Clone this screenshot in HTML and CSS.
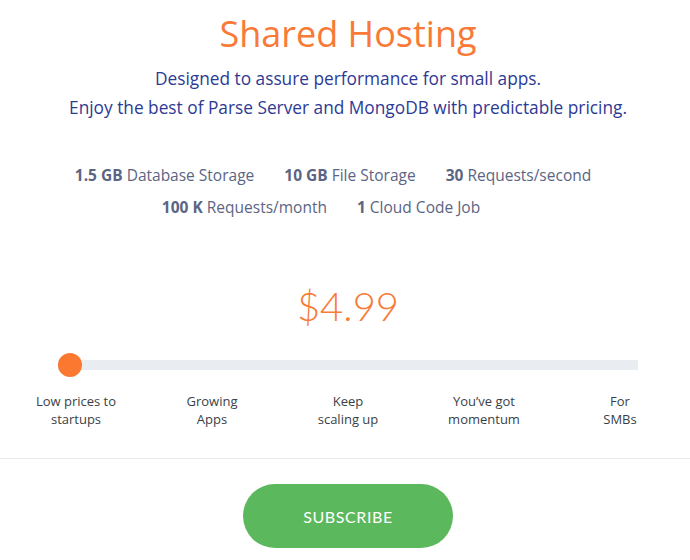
FILE: index.html
```html
<!DOCTYPE html>
<html>
<head>
<meta charset="utf-8">
<link rel="stylesheet" href="styles.css">
</head>
<body>
<div class="page">
  <h1 class="title">Shared Hosting</h1>
  <p class="subtitle">Designed to assure performance for small apps.<br>Enjoy the best of Parse Server and MongoDB with predictable pricing.</p>
  <ul class="features">
    <li><b>1.5 GB</b> Database Storage</li>
    <li><b>10 GB</b> File Storage</li>
    <li><b>30</b> Requests/second</li>
    <li><b>100 K</b> Requests/month</li>
    <li class="last"><b>1</b> Cloud Code Job</li>
  </ul>
  <div class="price">$4.99</div>
  <div class="slider">
    <div class="track"></div>
    <div class="thumb"></div>
  </div>
  <div class="labels">
    <div class="label">Low prices to<br>startups</div>
    <div class="label">Growing<br>Apps</div>
    <div class="label">Keep<br>scaling up</div>
    <div class="label">You’ve got<br>momentum</div>
    <div class="label">For<br>SMBs</div>
  </div>
</div>
<div class="divider"></div>
<div class="page actions">
  <button class="subscribe">SUBSCRIBE</button>
</div>
</body>
</html>
```

FILE: styles.css
```css
html, body {
  margin: 0;
  padding: 0;
  background: #ffffff;
}
body {
  font-family: "Open Sans", "Liberation Sans", sans-serif;
}
.page {
  width: 680px;
  margin-left: 8px;
  text-align: center;
}
.title {
  margin: 12px 0 0;
  font-size: 36px;
  line-height: 44px;
  font-weight: 400;
  color: #f97936;
}
.subtitle {
  margin: 8px 0 0;
  font-size: 17.3px;
  line-height: 29px;
  color: #2d3a94;
}
.features {
  list-style: none;
  margin: 42px auto 0;
  padding: 0;
  max-width: 590px;
  display: flex;
  flex-wrap: wrap;
  justify-content: center;
  row-gap: 9px;
  font-size: 15.5px;
  line-height: 23px;
  color: #5b6583;
}
.features li {
  margin-right: 30px;
}
.features li.last {
  margin-right: 54px;
}
.features b {
  font-weight: 700;
}
.price {
  margin-top: 63px;
  font-family: "Lato", "Open Sans", sans-serif;
  font-weight: 300;
  font-size: 40px;
  line-height: 48px;
  color: #f97936;
}
.slider {
  position: relative;
  margin: 23px 50px 0;
  height: 24px;
  display: flex;
  align-items: center;
}
.track {
  flex: 1;
  height: 10px;
  background: #e9edf1;
}
.thumb {
  position: absolute;
  left: 0;
  top: 0;
  width: 24px;
  height: 24px;
  border-radius: 50%;
  background: #fb7830;
}
.labels {
  margin-top: 15px;
  display: grid;
  grid-template-columns: repeat(5, 1fr);
  font-size: 13px;
  line-height: 18px;
  color: #3a3f47;
}
.divider {
  margin-top: 30px;
  height: 1px;
  background: #e9ecec;
}
.actions {
  padding-top: 25px;
}
.subscribe {
  width: 210px;
  height: 64px;
  border: none;
  border-radius: 32px;
  background: #5cb85c;
  color: #ffffff;
  font-family: "Lato", "Open Sans", sans-serif;
  font-size: 16px;
  font-weight: 400;
  letter-spacing: 0.6px;
  cursor: pointer;
}
```
